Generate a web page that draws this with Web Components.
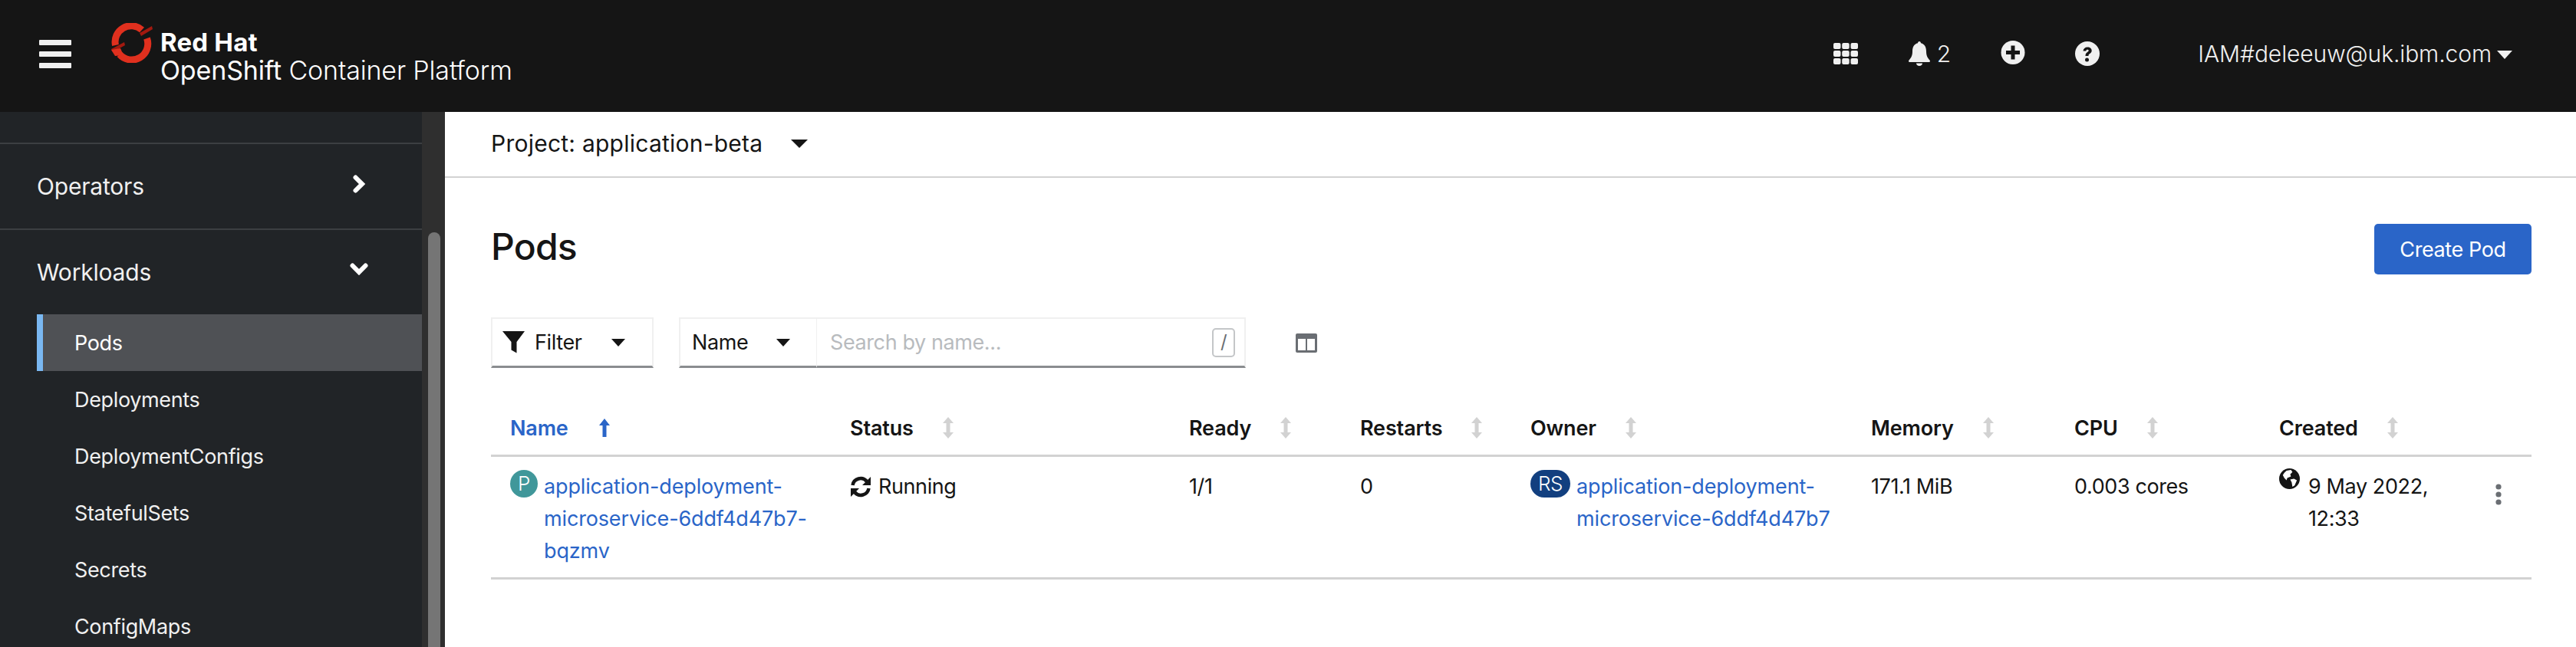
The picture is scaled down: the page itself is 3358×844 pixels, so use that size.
<!DOCTYPE html>
<html lang="en">
<head>
<meta charset="UTF-8">
<title>Pods</title>
<style>
  html, body { margin: 0; height: 100%; overflow: hidden; background: #fff; }
  body { font-family: Inter, "Open Sans", sans-serif; }
</style>
</head>
<body>
<ocp-app>
  <ocp-masthead slot="top"></ocp-masthead>
  <ocp-sidebar slot="side"></ocp-sidebar>
  <ocp-content slot="main"></ocp-content>
</ocp-app>

<script>
const FONT = 'Inter, "Open Sans", sans-serif';

// small helper, every element only differs in its markup
function define(tag, html) {
  customElements.define(tag, class extends HTMLElement {
    connectedCallback() {
      if (this.shadowRoot) return;
      const root = this.attachShadow({mode: 'open'});
      root.innerHTML = typeof html === 'function' ? html(this) : html;
    }
  });
}

define('ocp-app', `
  <style>
    :host { display: grid; grid-template-columns: 580px 1fr; grid-template-rows: 146px 698px; height: 844px; overflow: hidden; }
    .top { grid-column: 1 / 3; }
    ::slotted(*) { min-width: 0; }
  </style>
  <div class="top"><slot name="top"></slot></div>
  <slot name="side"></slot>
  <slot name="main"></slot>
`);

define('ocp-masthead', `
  <style>
    :host { display: flex; align-items: flex-start; height: 146px; background: #151515; color: #f0f0f0; font-family: ${FONT}; }
    svg { display: block; flex: none; }
    .burger { margin: 52px 0 0 51px; width: 42px; display: flex; flex-direction: column; gap: 8px; }
    .burger i { display: block; height: 7px; border-radius: 1px; background: #f0f0f0; }
    .logo { margin: 30px 0 0 51px; }
    .brand { margin: 37px 0 0 9px; color: #fff; }
    .rh { font-size: 33px; font-weight: 700; line-height: 36px; letter-spacing: .2px; height: 36px; }
    .osh { font-size: 34px; line-height: 38px; font-weight: 300; white-space: nowrap; letter-spacing: -.15px; }
    .osh b { font-weight: 400; }
    .tools { margin-left: auto; display: flex; align-items: flex-start; padding-right: 83px; font-size: 30px; }
    .grid { margin: 56px 0 0 0; }
    .bell { margin: 54px 0 0 66px; }
    .count { margin: 50px 0 0 9px; line-height: 40px; font-weight: 300; }
    .plus { margin: 53px 0 0 65px; }
    .help { margin: 54px 0 0 65px; }
    .user { margin: 50px 0 0 128px; line-height: 40px; font-weight: 300; letter-spacing: -.1px; white-space: nowrap; }
    .caret { margin: 66px 0 0 7px; }
  </style>
  <div class="burger"><i></i><i></i><i></i></div>
  <svg class="logo" width="56" height="52" viewBox="0 0 56 52">
    <g fill="none" stroke="#e0301e" stroke-width="9">
      <path d="M6.500 29A21 21 0 0 1 41 9"/>
      <path d="M47.500 20A21 21 0 0 1 12 41"/>
    </g>
    <path d="M1 34L18 25L19 29L3 38Z M38 13L54 4L55 8L40 17Z" fill="#a3190f"/>
    <path d="M1 35L13 33L17 42L6 43Z" fill="#e0301e"/>
  </svg>
  <div class="brand">
    <div class="rh">Red Hat</div>
    <div class="osh"><b>OpenShift</b> Container Platform</div>
  </div>
  <div class="tools">
    <svg class="grid" width="32" height="28" viewBox="0 0 32 28" fill="#f0f0f0">
      <rect x="0" y="0" width="9.5" height="8" rx="2"/><rect x="11.2" y="0" width="9.5" height="8" rx="2"/><rect x="22.5" y="0" width="9.5" height="8" rx="2"/>
      <rect x="0" y="10" width="9.5" height="8" rx="2"/><rect x="11.2" y="10" width="9.5" height="8" rx="2"/><rect x="22.5" y="10" width="9.5" height="8" rx="2"/>
      <rect x="0" y="20" width="9.5" height="8" rx="2"/><rect x="11.2" y="20" width="9.5" height="8" rx="2"/><rect x="22.5" y="20" width="9.5" height="8" rx="2"/>
    </svg>
    <svg class="bell" width="28" height="32" viewBox="0 0 28 32" fill="#f0f0f0">
      <path d="M14 0c1.300 0 2 1 2 2.300C21 3.500 23 7.500 23 13c0 6 2 8.500 4.500 11.500 .8 1 .4 2.500-1 2.500H1.500c-1.400 0-1.800-1.500-1-2.500C3 21.500 5 19 5 13c0-5.500 2-9.500 7-10.700C12 1 12.700 0 14 0Z"/>
      <path d="M10 28.500h8c0 2-1.800 3.500-4 3.500s-4-1.500-4-3.500Z"/>
    </svg>
    <div class="count">2</div>
    <svg class="plus" width="32" height="31" viewBox="0 0 32 31">
      <circle cx="16" cy="15.500" r="15.500" fill="#f0f0f0"/>
      <path d="M13.500 6.500h5v6.500h6.500v5h-6.500v6.500h-5v-6.500h-6.500v-5h6.500Z" fill="#151515"/>
    </svg>
    <svg class="help" width="32" height="32" viewBox="0 0 32 32">
      <circle cx="16" cy="16" r="16" fill="#f0f0f0"/>
      <path d="M10.500 12.500c.3-3 2.500-5 5.700-5 3.300 0 5.500 2 5.500 4.600 0 2.100-1.300 3.200-2.800 4.200-1.100.8-1.400 1.300-1.400 2.600h-4c0-2.500.8-3.600 2.500-4.800 1.200-.8 1.700-1.300 1.700-2 0-.9-.8-1.400-1.600-1.400-1 0-1.700.6-1.800 1.900Z" fill="#151515"/>
      <circle cx="15.500" cy="24" r="2.500" fill="#151515"/>
    </svg>
    <div class="user">IAM#deleeuw@uk.ibm.com</div>
    <svg class="caret" width="20" height="11" viewBox="0 0 20 11"><path d="M0 0h20L10 11Z" fill="#f0f0f0"/></svg>
  </div>
`);

define('ocp-nav-group', h => `
  <style>
    :host { display: block; box-sizing: border-box; height: 112px; border-top: 2px solid #3c3f42; }
    .row { display: flex; align-items: center; height: 110px; padding: 0 70px 0 48px; font-size: 30px; font-weight: 400; color: #f0f0f0; letter-spacing: -.2px; }
    span { flex: 1; }
    svg { display: block; }
  </style>
  <div class="row"><span>${h.getAttribute('label')}</span>
  ${h.hasAttribute('open')
    ? '<svg width="24" height="16" viewBox="0 0 24 16" style="margin-top:-8px"><path d="M3.500 3.500L12 12L20.500 3.500" fill="none" stroke="#fff" stroke-width="6" stroke-linecap="round"/></svg>'
    : '<svg width="24" height="24" viewBox="0 0 24 24" style="margin-top:-6px"><path d="M7.500 3.500L16 12L7.500 20.500" fill="none" stroke="#fff" stroke-width="6" stroke-linecap="round"/></svg>'}
  </div>
`);

define('ocp-nav-item', `
  <style>
    :host { display: flex; align-items: center; box-sizing: border-box; height: 74px; margin-left: 48px; padding-left: 49px; font-size: 27px; color: #f0f0f0; letter-spacing: -.35px; }
    :host([active]) { background: #4f5155; border-left: 8px solid #7ab8f2; padding-left: 41px; color: #fff; }
  </style>
  <slot></slot>
`);

define('ocp-sidebar', `
  <style>
    :host { display: flex; height: 698px; overflow: hidden; font-family: ${FONT}; background: #212427; }
    .nav { width: 550px; flex: none; padding-top: 40px; box-sizing: border-box; }
    .track { width: 30px; background: #2f2f2f; padding: 157px 6px 0 8px; box-sizing: border-box; }
    .thumb { height: 100%; background: #757575; border-radius: 8px 8px 0 0; }
  </style>
  <div class="nav">
    <ocp-nav-group label="Operators"></ocp-nav-group>
    <ocp-nav-group label="Workloads" open></ocp-nav-group>
    <ocp-nav-item active>Pods</ocp-nav-item>
    <ocp-nav-item>Deployments</ocp-nav-item>
    <ocp-nav-item>DeploymentConfigs</ocp-nav-item>
    <ocp-nav-item>StatefulSets</ocp-nav-item>
    <ocp-nav-item>Secrets</ocp-nav-item>
    <ocp-nav-item>ConfigMaps</ocp-nav-item>
  </div>
  <div class="track"><div class="thumb"></div></div>
`);

define('ocp-toolbar', `
  <style>
    :host { display: flex; align-items: center; height: 66px; color: #151515; font-size: 27px; letter-spacing: -.4px; }
    .box { display: flex; align-items: center; box-sizing: border-box; height: 66px; border: 2px solid #f0f0f0; border-bottom: 3px solid #8a8d90; }
    svg { display: block; flex: none; }
    .filter { width: 212px; padding-left: 13px; }
    .filter span { margin-left: 13px; width: 100px; }
    .name { margin-left: 33px; width: 180px; padding-left: 15px; border-right-width: 1px; }
    .name span { width: 110px; }
    .search { width: 559px; padding: 0 12px 0 17px; border-left: 0; justify-content: space-between; color: #b8bbbe; }
    .key { box-sizing: border-box; width: 30px; height: 38px; border: 2px solid #c4c6c8; border-radius: 5px; color: #6a6e73; text-align: center; font-size: 24px; line-height: 32px; }
    .cols { margin-left: 65px; }
  </style>
  <div class="box filter">
    <svg width="29" height="29" viewBox="0 0 29 29"><path d="M0 0h29L18.500 14v14.500l-7-4V14Z" fill="#151515"/></svg>
    <span>Filter</span>
    <svg width="18" height="10" viewBox="0 0 18 10"><path d="M0 0h18L9 10Z" fill="#151515"/></svg>
  </div>
  <div class="box name">
    <span>Name</span>
    <svg width="18" height="10" viewBox="0 0 18 10"><path d="M0 0h18L9 10Z" fill="#151515"/></svg>
  </div>
  <div class="box search"><span>Search by name...</span><div class="key">/</div></div>
  <svg class="cols" width="28" height="25" viewBox="0 0 28 25">
    <rect width="28" height="25" rx="2" fill="#6a6e73"/>
    <rect x="3" y="7" width="10" height="15" fill="#fff"/><rect x="15" y="7" width="10" height="15" fill="#fff"/>
  </svg>
`);

define('ocp-th', h => `
  <style>
    :host { display: flex; align-items: center; gap: ${h.getAttribute('gap') || 38}px; font-weight: 600; font-size: 27px; letter-spacing: -.15px; color: #151515; white-space: nowrap; }
    :host([sorted]) { color: #2a65c8; }
    svg { display: block; flex: none; }
  </style>
  <slot></slot>
  ${h.hasAttribute('sorted')
    ? '<svg width="14" height="24" viewBox="0 0 14 24"><path d="M7 0l7 9H9.500v15h-5V9H0Z" fill="#2a65c8"/></svg>'
    : '<svg width="14" height="28" viewBox="0 0 14 28"><path d="M7 0l7 8H9.500v12H14l-7 8-7-8h4.500V8H0Z" fill="#d2d2d2"/></svg>'}
`);

define('ocp-res', h => `
  <style>
    :host { display: flex; align-items: flex-start; gap: 8px; }
    .badge { flex: none; box-sizing: border-box; height: 36px; width: ${h.getAttribute('w') || 36}px; margin-top: -1px; border-radius: 18px; background: ${h.getAttribute('color')}; color: #fff; font-size: 26px; font-weight: 300; line-height: 36px; text-align: center; letter-spacing: -.5px; }
    a { color: #2a65c8; text-decoration: none; letter-spacing: -.15px; }
  </style>
  <span class="badge">${h.getAttribute('kind')}</span>
  <a><slot></slot></a>
`);

define('ocp-table', `
  <style>
    :host { display: block; font-size: 27px; color: #151515; letter-spacing: -.4px; }
    .grid { display: grid; grid-template-columns: 443px 442px 223px 222px 444px 265px 267px 282px 1fr; padding-left: 25px; box-sizing: border-box; }
    .grid > * { min-width: 0; }
    .head { height: 116px; padding-top: 43px; align-items: center; border-bottom: 3px solid #d2d2d2; }
    .row { height: 160px; padding-top: 18px; border-bottom: 3px solid #d2d2d2; line-height: 42px; }
    .row svg { display: block; flex: none; }
    .run { display: flex; gap: 9px; align-items: center; height: 42px; }
    .when { display: flex; gap: 11px; align-items: flex-start; }
    .kebab { margin-top: 17px; }
  </style>
  <div class="grid head">
    <ocp-th sorted gap="40">Name</ocp-th>
    <ocp-th>Status</ocp-th>
    <ocp-th>Ready</ocp-th>
    <ocp-th>Restarts</ocp-th>
    <ocp-th>Owner</ocp-th>
    <ocp-th>Memory</ocp-th>
    <ocp-th>CPU</ocp-th>
    <ocp-th>Created</ocp-th>
    <div></div>
  </div>
  <div class="grid row">
    <ocp-res kind="P" color="#40979a">application-deployment-<br>microservice-6ddf4d47b7-<br>bqzmv</ocp-res>
    <div class="run">
      <svg width="28" height="28" viewBox="0 0 28 28"><g fill="none" stroke="#151515" stroke-width="4.500"><path d="M3.500 12A10.500 10.500 0 0 1 22 7"/><path d="M24.500 16A10.500 10.500 0 0 1 6 21"/></g><path d="M27 1v11H16Z M1 27V16h11Z" fill="#151515"/></svg>
      <span>Running</span>
    </div>
    <div>1/1</div>
    <div>0</div>
    <ocp-res kind="RS" w="52" color="#123f7f">application-deployment-<br>microservice-6ddf4d47b7</ocp-res>
    <div>171.1 MiB</div>
    <div>0.003 cores</div>
    <div class="when">
      <svg width="27" height="27" viewBox="0 0 28 28" style="margin-top:-3px"><circle cx="14" cy="14" r="14" fill="#151515"/><path d="M10 3l6-1 2 3-3 3 1 3-5 2-1 3-3-3-2-4 2-3ZM15 15l5-1 4 2-3 7-3 2-1-6Z" fill="#fff"/></svg>
      <span>9 May 2022,<br>12:33</span>
    </div>
    <svg class="kebab" width="8" height="28" viewBox="0 0 8 28" fill="#6a6e73"><circle cx="4" cy="4" r="3.600"/><circle cx="4" cy="14" r="3.600"/><circle cx="4" cy="24" r="3.600"/></svg>
  </div>
`);

define('ocp-content', `
  <style>
    :host { display: block; height: 698px; overflow: hidden; background: #fff; font-family: ${FONT}; color: #151515; }
    .project { display: flex; align-items: center; height: 86px; box-sizing: border-box; padding: 0 0 2px 60px; border-bottom: 2px solid #d2d2d2; font-size: 30px; letter-spacing: .24px; }
    .project svg { margin-left: 37px; }
    .page { padding: 0 58px 0 60px; }
    .title { display: flex; justify-content: space-between; align-items: flex-start; padding-top: 60px; height: 66px; }
    h1 { margin: 0; font-size: 48px; font-weight: 500; line-height: 60px; letter-spacing: -.8px; }
    button { box-sizing: border-box; width: 205px; height: 66px; border: 0; border-radius: 5px; background: #2a65c8; color: #fff; font: 400 27px ${FONT}; letter-spacing: -.4px; }
    ocp-toolbar { margin-top: 56px; }
  </style>
  <div class="project">Project: application-beta
    <svg width="22" height="11" viewBox="0 0 22 11"><path d="M0 0h22L11 11Z" fill="#151515"/></svg>
  </div>
  <div class="page">
    <div class="title"><h1>Pods</h1><button>Create Pod</button></div>
    <ocp-toolbar></ocp-toolbar>
    <ocp-table></ocp-table>
  </div>
`);
</script>
</body>
</html>
